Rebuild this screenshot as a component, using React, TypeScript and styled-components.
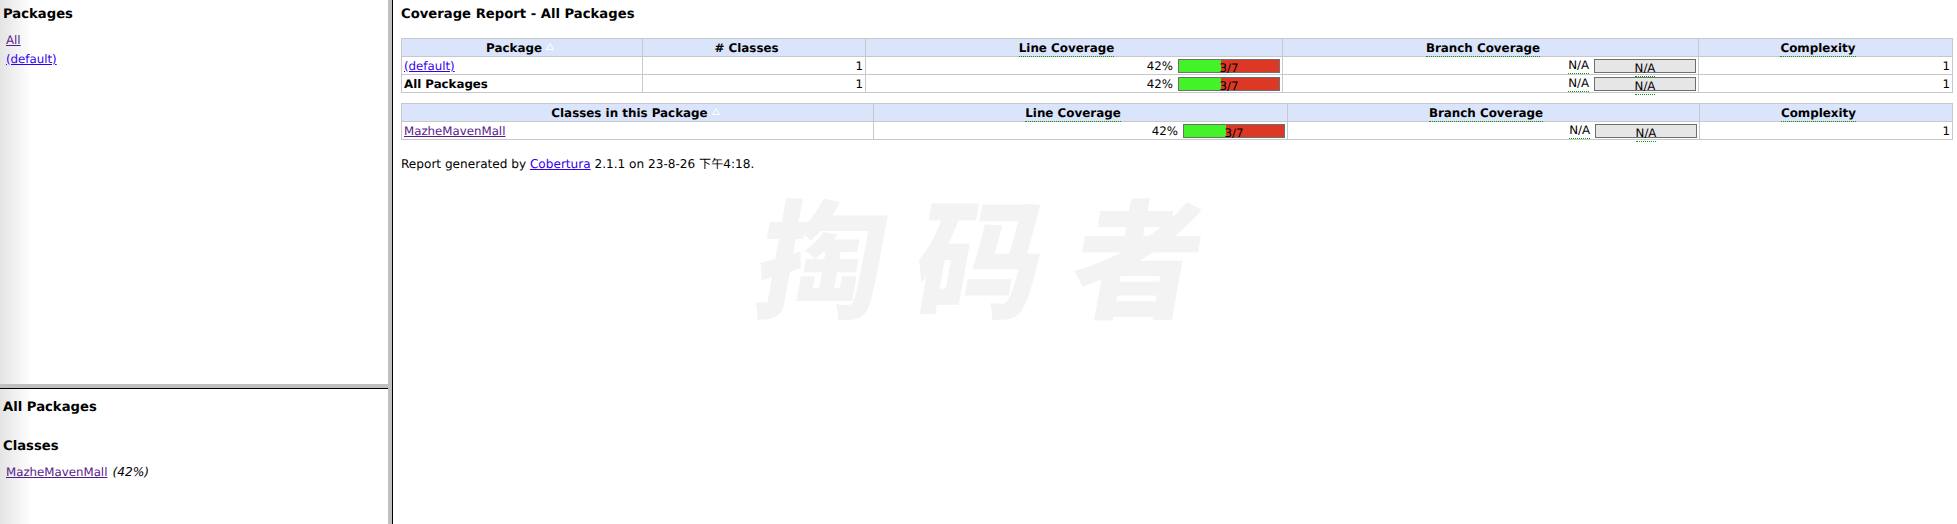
import React from "react";
import styled, { createGlobalStyle } from "styled-components";

const Global = createGlobalStyle`
  html, body { margin: 0; padding: 0; height: 100%; background: #fff; overflow: hidden; }
  #root { height: 100%; }
`;

const font = `"DejaVu Sans", Verdana, "Noto Sans CJK SC", sans-serif`;

const Frames = styled.div`
  display: flex;
  width: 1957px;
  height: 524px;
  font-family: ${font};
  font-size: 11.8px;
  color: #000;
  text-rendering: geometricPrecision;
`;
const Side = styled.aside`
  width: 388px;
  flex: none;
  display: flex;
  flex-direction: column;
`;
const Pane = styled.section<{ $h?: number; $top: number }>`
  ${(p) => (p.$h ? `height: ${p.$h}px; flex: none;` : "flex: 1;")}
  background: linear-gradient(90deg, #e4e4e4 0, #fff 32px);
  padding: ${(p) => p.$top}px 3px 0;
  box-sizing: border-box;
`;
const HDivider = styled.div`
  flex: none;
  height: 5px;
  background: #c0c0c0;
  border-bottom: 1px solid #000;
  box-sizing: border-box;
`;
const VDivider = styled.div`
  flex: none;
  width: 5px;
  background: #c0c0c0;
  border-right: 1px solid #000;
  box-sizing: border-box;
`;
const Title = styled.h5<{ $gap?: number }>`
  font-size: 13.2px;
  line-height: 16px;
  margin: 0 0 ${(p) => p.$gap ?? 8}px;
  font-weight: bold;
`;
const NavList = styled.div`
  padding-left: 3px;
`;
const NavRow = styled.div`
  line-height: 18.5px;
  white-space: nowrap;
`;
const Link = styled.a<{ $visited?: boolean }>`
  color: ${(p) => (p.$visited ? "#551a8b" : "#3300ee")};
  text-decoration: underline;
  cursor: pointer;
`;
const Pct = styled.i`
  margin-left: 5px;
  font-size: 12.2px;
`;
const Main = styled.main`
  position: relative;
  flex: 1;
  padding: 7px 5px 0 8px;
  min-width: 0;
`;
const Report = styled.table`
  width: 100%;
  border-collapse: collapse;
  table-layout: fixed;
  margin-bottom: 10px;
`;
const Th = styled.th<{ $w: number; $sorted?: boolean }>`
  box-sizing: border-box;
  width: ${(p) => p.$w}px;
  height: 18px;
  padding: 0 ${(p) => (p.$sorted ? 4 : 15)}px 0 0;
  background: #dae4fb;
  border: 1px solid #c8c8c8;
  font-size: 11.9px;
  font-weight: bold;
  text-align: center;
`;
const Td = styled.td<{ $left?: boolean; $bold?: boolean }>`
  box-sizing: border-box;
  height: 18px;
  padding: 0 2px;
  border: 1px solid #c8c8c8;
  text-align: ${(p) => (p.$left ? "left" : "right")};
  font-weight: ${(p) => (p.$bold ? "bold" : "normal")};
  white-space: nowrap;
`;
const Hint = styled.span`
  padding-bottom: 1px;
  border-bottom: 1px dotted #0f9a0f;
`;
const SortMark = styled.svg`
  margin-left: 4px;
  vertical-align: 2px;
`;
const Cover = styled.div`
  display: flex;
  justify-content: flex-end;
  align-items: center;
  gap: 5px;
`;
const Bar = styled.div<{ $na?: boolean }>`
  position: relative;
  width: 102px;
  height: 14px;
  box-sizing: border-box;
  border: 1px solid #6f6f6f;
  background: ${(p) => (p.$na ? "#e6e6e6" : "#dc3825")};
  text-align: center;
  line-height: 14px;
`;
const Fill = styled.div`
  position: absolute;
  left: 0;
  top: 0;
  bottom: 0;
  background: #44f22a;
`;
const BarLabel = styled.span`
  position: relative;
  top: 1px;
`;
const Footer = styled.p`
  margin: 0;
  padding-top: 6px;
  line-height: 16px;
  font-size: 12.1px;
`;
const Watermark = styled.div`
  position: absolute;
  left: 367px;
  top: 168px;
  font-family: "Noto Sans CJK SC", sans-serif;
  font-size: 128px;
  line-height: 170px;
  font-weight: 900;
  letter-spacing: 30px;
  color: #f3f3f3;
  transform: skewX(-10deg);
  white-space: nowrap;
  pointer-events: none;
  user-select: none;
`;

function Coverage({ pct }: { pct: number }) {
  return (
    <Cover>
      <span>{pct}%</span>
      <Bar>
        <Fill style={{ width: `${pct}%` }} />
        <BarLabel>3/7</BarLabel>
      </Bar>
    </Cover>
  );
}
function NotAvailable() {
  return (
    <Cover>
      <Hint>N/A</Hint>
      <Bar $na>
        <BarLabel>
          <Hint>N/A</Hint>
        </BarLabel>
      </Bar>
    </Cover>
  );
}
const Sort = () => (
  <SortMark width="8" height="7" viewBox="0 0 8 7">
    <path d="M4 .5 7.5 6.5H.5Z" fill="none" stroke="#fff" />
  </SortMark>
);
const Heads = ({ first, w }: { first: React.ReactNode; w: number[] }) => (
  <thead>
    <tr>
      <Th $w={w[0]} $sorted>{first}</Th>
      {w.length === 5 && <Th $w={w[1]}># Classes</Th>}
      <Th $w={w[w.length - 3]}><Hint>Line Coverage</Hint></Th>
      <Th $w={w[w.length - 2]}><Hint>Branch Coverage</Hint></Th>
      <Th $w={w[w.length - 1]}><Hint>Complexity</Hint></Th>
    </tr>
  </thead>
);

export default function App() {
  return (
    <Frames>
      <Global />
      <Side>
        <Pane $h={384} $top={7}>
          <Title>Packages</Title>
          <NavList>
            <NavRow><Link $visited>All</Link></NavRow>
            <NavRow><Link>(default)</Link></NavRow>
          </NavList>
        </Pane>
        <HDivider />
        <Pane $top={11}>
          <Title $gap={23}>All Packages</Title>
          <Title>Classes</Title>
          <NavList>
            <NavRow><Link $visited>MazheMavenMall</Link><Pct>(42%)</Pct></NavRow>
          </NavList>
        </Pane>
      </Side>
      <VDivider />
      <Main>
        <Title $gap={15}>Coverage Report - All Packages</Title>
        <Report>
          <Heads first={<>Package<Sort /></>} w={[241, 223, 417, 416, 254]} />
          <tbody>
            <tr>
              <Td $left><Link>(default)</Link></Td>
              <Td>1</Td>
              <Td><Coverage pct={42} /></Td>
              <Td><NotAvailable /></Td>
              <Td>1</Td>
            </tr>
            <tr>
              <Td $left $bold>All Packages</Td>
              <Td>1</Td>
              <Td><Coverage pct={42} /></Td>
              <Td><NotAvailable /></Td>
              <Td>1</Td>
            </tr>
          </tbody>
        </Report>
        <Report>
          <Heads first={<>Classes in this Package<Sort /></>} w={[472, 414, 412, 253]} />
          <tbody>
            <tr>
              <Td $left><Link $visited>MazheMavenMall</Link></Td>
              <Td><Coverage pct={42} /></Td>
              <Td><NotAvailable /></Td>
              <Td>1</Td>
            </tr>
          </tbody>
        </Report>
        <Footer>
          Report generated by <Link>Cobertura</Link> 2.1.1 on 23-8-26 下午4:18.
        </Footer>
        <Watermark>掏码者</Watermark>
      </Main>
    </Frames>
  );
}
